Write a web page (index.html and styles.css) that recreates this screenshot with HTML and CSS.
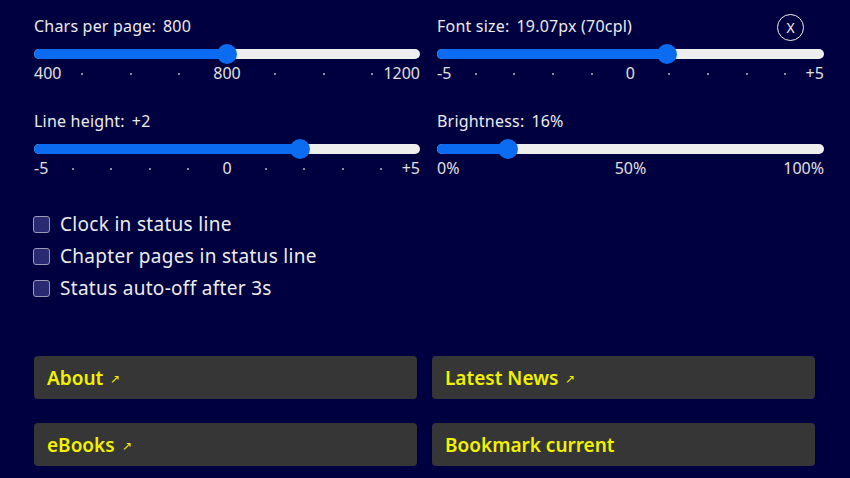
FILE: index.html
```html
<!DOCTYPE html>
<html>
<head>
<meta charset="utf-8">
<link rel="stylesheet" href="styles.css">
</head>
<body>
<div class="panel">
  <button class="close" type="button">X</button>
  <div class="sliders">
    <div class="setting">
      <div class="label">Chars per page:<span class="val">800</span></div>
      <div class="track"><div class="fill" style="width: calc(10px + 50% - 20px * 0.5)"></div><div class="thumb" style="left: calc(50% - 20px * 0.5)"></div></div>
      <div class="ticks">
        <span class="tk first">400</span><span class="tk"><i></i></span><span class="tk"><i></i></span><span class="tk"><i></i></span><span class="tk">800</span><span class="tk"><i></i></span><span class="tk"><i></i></span><span class="tk"><i></i></span><span class="tk last">1200</span>
      </div>
    </div>
    <div class="setting">
      <div class="label">Font size:<span class="val">19.07px (70cpl)</span></div>
      <div class="track"><div class="fill" style="width: calc(10px + 60% - 20px * 0.6)"></div><div class="thumb" style="left: calc(60% - 20px * 0.6)"></div></div>
      <div class="ticks">
        <span class="tk first">-5</span><span class="tk"><i></i></span><span class="tk"><i></i></span><span class="tk"><i></i></span><span class="tk"><i></i></span><span class="tk">0</span><span class="tk"><i></i></span><span class="tk"><i></i></span><span class="tk"><i></i></span><span class="tk"><i></i></span><span class="tk last">+5</span>
      </div>
    </div>
    <div class="setting">
      <div class="label">Line height:<span class="val">+2</span></div>
      <div class="track"><div class="fill" style="width: calc(10px + 70% - 20px * 0.7)"></div><div class="thumb" style="left: calc(70% - 20px * 0.7)"></div></div>
      <div class="ticks">
        <span class="tk first">-5</span><span class="tk"><i></i></span><span class="tk"><i></i></span><span class="tk"><i></i></span><span class="tk"><i></i></span><span class="tk">0</span><span class="tk"><i></i></span><span class="tk"><i></i></span><span class="tk"><i></i></span><span class="tk"><i></i></span><span class="tk last">+5</span>
      </div>
    </div>
    <div class="setting">
      <div class="label">Brightness:<span class="val">16%</span></div>
      <div class="track"><div class="fill" style="width: calc(10px + 16.5% - 20px * 0.165)"></div><div class="thumb" style="left: calc(16.5% - 20px * 0.165)"></div></div>
      <div class="ticks">
        <span class="tk first">0%</span><span class="tk">50%</span><span class="tk last">100%</span>
      </div>
    </div>
  </div>

  <div class="checks">
    <label class="check"><span class="box"></span>Clock in status line</label>
    <label class="check"><span class="box"></span>Chapter pages in status line</label>
    <label class="check"><span class="box"></span>Status auto-off after 3s</label>
  </div>

  <div class="buttons">
    <a class="btn">About <span class="arrow">↗</span></a>
    <a class="btn">Latest News <span class="arrow">↗</span></a>
    <a class="btn">eBooks <span class="arrow">↗</span></a>
    <a class="btn">Bookmark current</a>
  </div>
</div>
</body>
</html>
```

FILE: styles.css
```css
html, body {
  margin: 0;
  padding: 0;
  background: #000040;
}
body {
  font-family: "Noto Sans", "Open Sans", sans-serif;
  color: #e6e6e6;
  width: 850px;
  height: 478px;
  overflow: hidden;
}
.panel {
  position: relative;
  padding: 16px 26px 0 34px;
}
.close {
  position: absolute;
  top: 14px;
  left: 777px;
  width: 27px;
  height: 27px;
  box-sizing: border-box;
  border: 1.5px solid #f0f0f0;
  border-radius: 50%;
  background: transparent;
  color: #f0f0f0;
  font-family: "Noto Sans", sans-serif;
  font-size: 14px;
  line-height: 22px;
  padding: 0;
  text-align: center;
}
.sliders {
  display: grid;
  grid-template-columns: 386px 387px;
  column-gap: 17px;
  row-gap: 28px;
}
.label {
  font-size: 16px;
  letter-spacing: 0.2px;
  line-height: 20px;
  color: #ececec;
}
.val {
  margin-left: 7px;
}
.track {
  position: relative;
  margin-top: 13px;
  height: 10px;
  border-radius: 5px;
  background: #eeeeee;
}
.fill {
  height: 10px;
  border-radius: 5px;
  background: #0b6cf2;
}
.thumb {
  position: absolute;
  top: -5px;
  width: 20px;
  height: 20px;
  border-radius: 50%;
  background: #0b6cf2;
}
.ticks {
  margin-top: 4px;
  padding: 0 10px;
  display: flex;
  justify-content: space-between;
  font-size: 16px;
  line-height: 20px;
  color: #e0e0e0;
}
.tk {
  width: 0;
  display: flex;
  justify-content: center;
  align-items: center;
  white-space: nowrap;
}
.tk.first {
  justify-content: flex-start;
  margin-left: -10px;
}
.tk.last {
  justify-content: flex-end;
  margin-right: -10px;
}
.tk i {
  display: block;
  flex-shrink: 0;
  width: 2px;
  height: 2px;
  margin-top: 2px;
  border-radius: 1px;
  background: #b8b8c8;
}
.checks {
  margin-top: 30px;
  display: flex;
  flex-direction: column;
}
.check {
  display: flex;
  align-items: center;
  height: 32px;
  font-size: 19px;
  letter-spacing: 0.3px;
  color: #ececec;
}
.box {
  width: 17px;
  height: 17px;
  box-sizing: border-box;
  margin-left: -1px;
  margin-right: 10px;
  border: 1.5px solid #9a9ab4;
  border-radius: 3px;
  background: #2a2a72;
}
.buttons {
  margin-top: 52px;
  display: grid;
  grid-template-columns: 383px 383px;
  column-gap: 15px;
  row-gap: 24px;
}
.btn {
  display: flex;
  align-items: center;
  height: 43px;
  box-sizing: border-box;
  padding-left: 13px;
  border-radius: 4px;
  background: #363636;
  color: #f2f200;
  font-size: 19px;
  font-weight: 600;
  white-space: pre;
}
.arrow {
  font-size: 12px;
  font-weight: 400;
  margin-left: 2px;
  margin-top: 2px;
}
```
